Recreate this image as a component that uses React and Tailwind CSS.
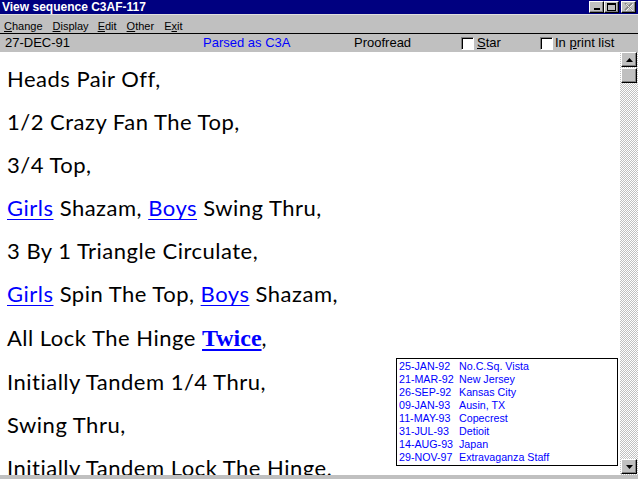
import React from "react";

const Raised = ({ className = "", children }) => (
  <div
    className={
      "flex items-center justify-center bg-[#c0c0c0] border border-t-white border-l-white border-b-black border-r-black shadow-[inset_-1px_-1px_0_#808080] " +
      className
    }
  >
    {children}
  </div>
);

const Check = () => (
  <span className="inline-block w-[13px] h-[13px] bg-white border border-t-[#808080] border-l-[#808080] border-b-white border-r-white shadow-[inset_1px_1px_0_#000]" />
);

const L = ({ children }) => (
  <span className="text-[#0000ff] underline decoration-1 underline-offset-[3px]">{children}</span>
);

const lines = [
  <>Heads Pair Off,</>,
  <>1/2 Crazy Fan The Top,</>,
  <>3/4 Top,</>,
  <>
    <L>Girls</L> Shazam, <L>Boys</L> Swing Thru,
  </>,
  <>3 By 1 Triangle Circulate,</>,
  <>
    <L>Girls</L> Spin The Top, <L>Boys</L> Shazam,
  </>,
  <>
    All Lock The Hinge{" "}
    <span className="font-['Liberation_Serif',serif] font-bold text-[24px] tracking-normal text-[#0000ff] underline decoration-2 underline-offset-[3px]">
      Twice
    </span>
    ,
  </>,
  <>Initially Tandem 1/4 Thru,</>,
  <>Swing Thru,</>,
  <>Initially Tandem Lock The Hinge,</>,
];

const history = [
  ["25-JAN-92", "No.C.Sq. Vista"],
  ["21-MAR-92", "New Jersey"],
  ["26-SEP-92", "Kansas City"],
  ["09-JAN-93", "Ausin, TX"],
  ["11-MAY-93", "Copecrest"],
  ["31-JUL-93", "Detioit"],
  ["14-AUG-93", "Japan"],
  ["29-NOV-97", "Extravaganza Staff"],
];

export default function App() {
  return (
    <div className="w-[638px] h-[479px] bg-[#c0c0c0] overflow-hidden flex flex-col font-['Liberation_Sans',Arial,sans-serif]">
      {/* Title bar */}
      <div className="h-[14px] bg-[#000080] flex items-center justify-between pl-[2px] pr-[2px]">
        <span className="text-white font-bold text-[12px] leading-none">View sequence C3AF-117</span>
        <div className="flex items-center">
          <Raised className="w-[15px] h-[12px] items-end pb-[2px]">
            <span className="block w-[6px] h-[2px] bg-black" />
          </Raised>
          <Raised className="w-[15px] h-[12px]">
            <span className="block w-[9px] h-[8px] border border-black border-t-2" />
          </Raised>
          <Raised className="w-[15px] h-[12px] ml-[2px]">
            <svg width="9" height="8" viewBox="0 0 9 8">
              <path d="M1 0 L8 7 M8 0 L1 7" stroke="#808080" strokeWidth="1.6" />
              <path d="M2 1 L9 8 M9 1 L2 8" stroke="#ffffff" strokeWidth="1" opacity="0.8" />
            </svg>
          </Raised>
        </div>
      </div>
      {/* Menu bar */}
      <div className="h-[19px] flex items-center pt-[5px] text-[11px] text-black border-t border-[#dfdfdf]">
        <span className="ml-[4px]"><u>C</u>hange</span>
        <span className="ml-[10px]"><u>D</u>isplay</span>
        <span className="ml-[9px]"><u>E</u>dit</span>
        <span className="ml-[10px]"><u>O</u>ther</span>
        <span className="ml-[10px]">E<u>x</u>it</span>
      </div>
      <div className="h-px bg-black" />
      {/* Status row */}
      <div className="h-[18px] flex items-center text-[13px] text-black">
        <span className="ml-[5px] w-[198px]">27-DEC-91</span>
        <span className="w-[151px] text-[#0000ff]">Parsed as C3A</span>
        <span className="w-[107px]">Proofread</span>
        <Check />
        <span className="ml-[3px] w-[63px]"><u>S</u>tar</span>
        <Check />
        <span className="ml-[2px]">In <u>p</u>rint list</span>
      </div>
      {/* Main */}
      <div className="h-[423px] flex">
        <div className="flex-1 bg-white relative overflow-hidden pl-[7px] pt-[5px]">
          {lines.map((l, i) => (
            <div key={i} className="text-[22px] leading-[43.1px] tracking-[0.5px] text-black whitespace-nowrap font-['Lato',sans-serif]">
              {l}
            </div>
          ))}
          <div className="absolute left-[396px] top-[306px] w-[222px] h-[108px] border border-black bg-white pl-[2px] pt-[1px] text-[10.7px] leading-[13px] text-[#0000ff]">
            {history.map(([d, p]) => (
              <div key={d} className="flex">
                <span className="w-[60px]">{d}</span>
                <span>{p}</span>
              </div>
            ))}
          </div>
        </div>
        <div className="w-[18px] flex flex-col items-center bg-[repeating-conic-gradient(#c0c0c0_0_25%,#ffffff_0_50%)] bg-[length:2px_2px]">
          <Raised className="w-[16px] h-[15px] shrink-0">
            <svg width="7" height="4" viewBox="0 0 7 4"><path d="M3.5 0 L7 4 L0 4 Z" fill="#000" /></svg>
          </Raised>
          <Raised className="w-[16px] h-[15px] mt-px shrink-0" />
          <div className="flex-1" />
          <Raised className="w-[16px] h-[15px] mb-px shrink-0">
            <svg width="7" height="4" viewBox="0 0 7 4"><path d="M0 0 L7 0 L3.5 4 Z" fill="#000" /></svg>
          </Raised>
        </div>
      </div>
      <div className="h-[4px] bg-[#c0c0c0]" />
    </div>
  );
}
